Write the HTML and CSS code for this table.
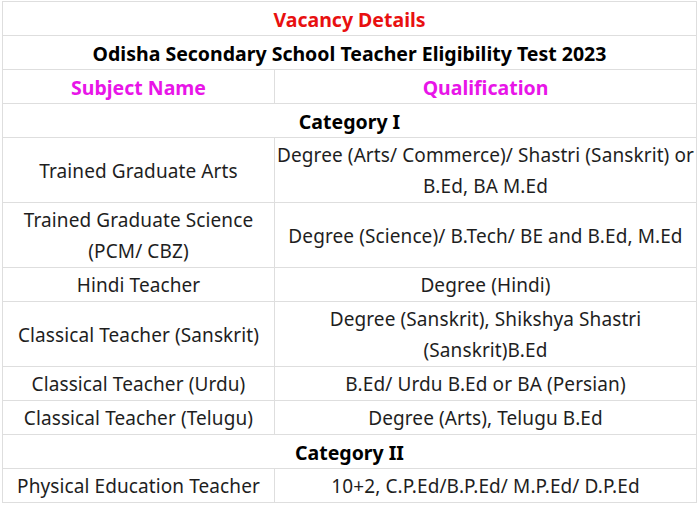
FILE: index.html
```html
<!DOCTYPE html>
<html>
<head>
<meta charset="utf-8">
<link rel="stylesheet" href="styles.css">
</head>
<body>
<table class="vacancy">
  <colgroup><col class="c1"><col class="c2"></colgroup>
  <tr><td colspan="2" class="title red">Vacancy Details</td></tr>
  <tr><td colspan="2" class="title">Odisha Secondary School Teacher Eligibility Test 2023</td></tr>
  <tr><td class="title pink">Subject Name</td><td class="title pink">Qualification</td></tr>
  <tr><td colspan="2" class="title">Category I</td></tr>
  <tr><td>Trained Graduate Arts</td><td>Degree (Arts/ Commerce)/ Shastri (Sanskrit) or<br>B.Ed, BA M.Ed</td></tr>
  <tr><td>Trained Graduate Science<br>(PCM/ CBZ)</td><td>Degree (Science)/ B.Tech/ BE and B.Ed, M.Ed</td></tr>
  <tr><td>Hindi Teacher</td><td>Degree (Hindi)</td></tr>
  <tr><td>Classical Teacher (Sanskrit)</td><td>Degree (Sanskrit), Shikshya Shastri<br>(Sanskrit)B.Ed</td></tr>
  <tr><td>Classical Teacher (Urdu)</td><td>B.Ed/ Urdu B.Ed or BA (Persian)</td></tr>
  <tr><td>Classical Teacher (Telugu)</td><td>Degree (Arts), Telugu B.Ed</td></tr>
  <tr><td colspan="2" class="title">Category II</td></tr>
  <tr><td>Physical Education Teacher</td><td>10+2, C.P.Ed/B.P.Ed/ M.P.Ed/ D.P.Ed</td></tr>
</table>
</body>
</html>
```
FILE: styles.css
```css
html, body {
  margin: 0;
  background: #fff;
}
body {
  padding: 1px 1px 0 2px;
  font-family: "Noto Sans", "Open Sans", sans-serif;
  font-size: 19px;
  color: #1e1e1e;
}
.vacancy {
  width: 694px;
  border-collapse: collapse;
  table-layout: fixed;
}
.c1 { width: 272px; }
.c2 { width: 422px; }
.vacancy td {
  border: 1px solid #dedede;
  text-align: center;
  vertical-align: middle;
  line-height: 31px;
  padding: 2px 1px 0 1px;
  white-space: nowrap;
  letter-spacing: 0.1px;
}
.vacancy .title {
  font-weight: 700;
  font-size: 19.5px;
  color: #000;
  letter-spacing: 0;
}
.vacancy .red { color: #e81010; }
.vacancy .pink { color: #e815e8; }
```
